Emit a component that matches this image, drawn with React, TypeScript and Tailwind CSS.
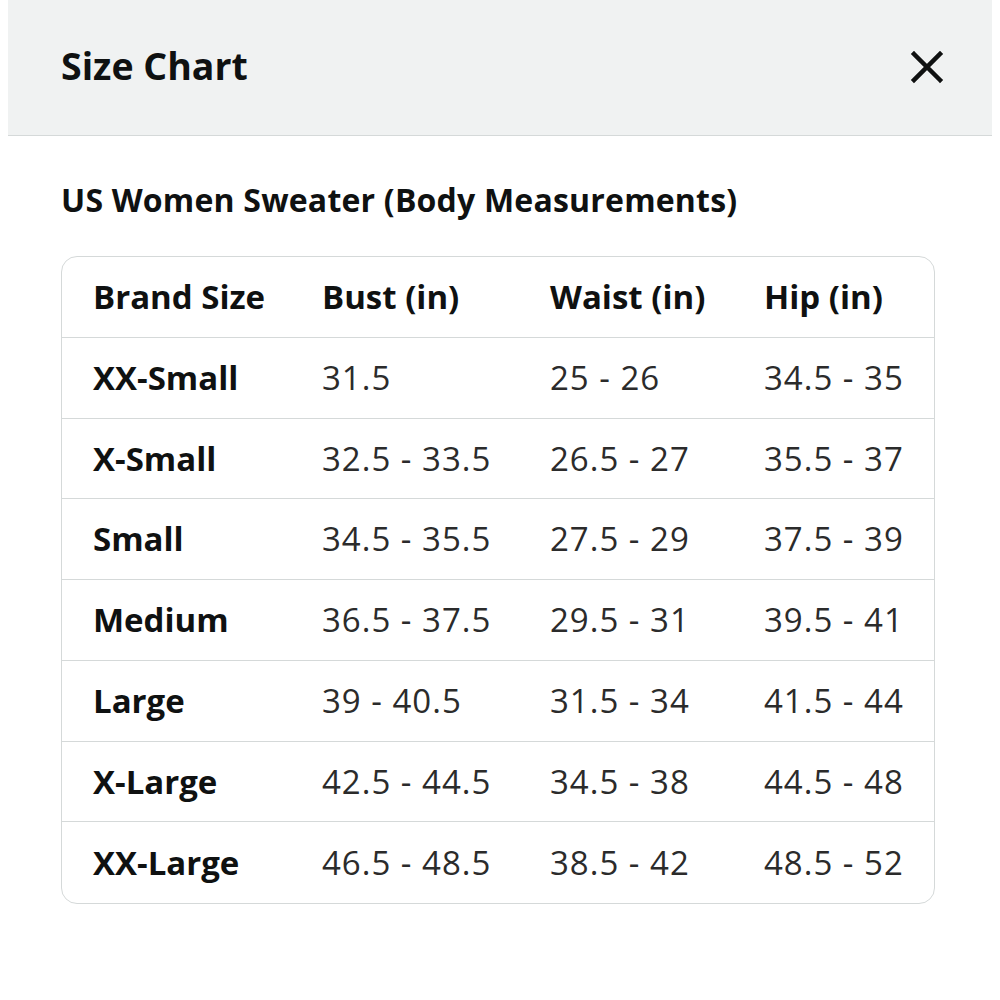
import React from "react";

const rows = [
  ["XX-Small", "31.5", "25 - 26", "34.5 - 35"],
  ["X-Small", "32.5 - 33.5", "26.5 - 27", "35.5 - 37"],
  ["Small", "34.5 - 35.5", "27.5 - 29", "37.5 - 39"],
  ["Medium", "36.5 - 37.5", "29.5 - 31", "39.5 - 41"],
  ["Large", "39 - 40.5", "31.5 - 34", "41.5 - 44"],
  ["X-Large", "42.5 - 44.5", "34.5 - 38", "44.5 - 48"],
  ["XX-Large", "46.5 - 48.5", "38.5 - 42", "48.5 - 52"],
];

export default function App() {
  return (
    <div
      className="w-[1000px] h-[1000px] bg-white px-[8px]"
      style={{ fontFamily: '"Open Sans", "Liberation Sans", sans-serif' }}
    >
      <div className="h-[136px] bg-[#f0f2f2] border-b border-[#d5d9d9] flex items-center justify-between pl-[53px] pr-[48px]">
        <h1 className="text-[37.5px] font-bold text-[#0f1111] pb-[2px]">Size Chart</h1>
        <svg width="34" height="34" viewBox="0 0 34 34" className="mb-[2px]">
          <path d="M4 4 L30 30 M30 4 L4 30" stroke="#0f1111" strokeWidth="4.5" strokeLinecap="square" />
        </svg>
      </div>
      <div className="pl-[53px]">
        <h2 className="mt-[44px] text-[32px] font-bold text-[#0f1111] leading-[40px] tracking-[0.2px]">
          US Women Sweater (Body Measurements)
        </h2>
        <div className="mt-[36px] w-[874px] border border-[#d5d9d9] rounded-[16px] overflow-hidden">
          {[["Brand Size", "Bust (in)", "Waist (in)", "Hip (in)"], ...rows].map((r, i) => (
            <div
              key={i}
              className={
                "grid grid-cols-[229px_228px_214px_1fr] h-[80.75px] items-center text-[33px] " +
                (i < 7 ? "border-b border-[#d5d9d9]" : "")
              }
            >
              {r.map((c, j) => (
                <div
                  key={j}
                  className={
                    "pl-[31px] whitespace-nowrap " +
                    (i === 0 || j === 0
                      ? "font-bold text-[#0f1111]"
                      : "text-[#2b2b2b] tracking-[1px]")
                  }
                >
                  {c}
                </div>
              ))}
            </div>
          ))}
        </div>
      </div>
    </div>
  );
}
